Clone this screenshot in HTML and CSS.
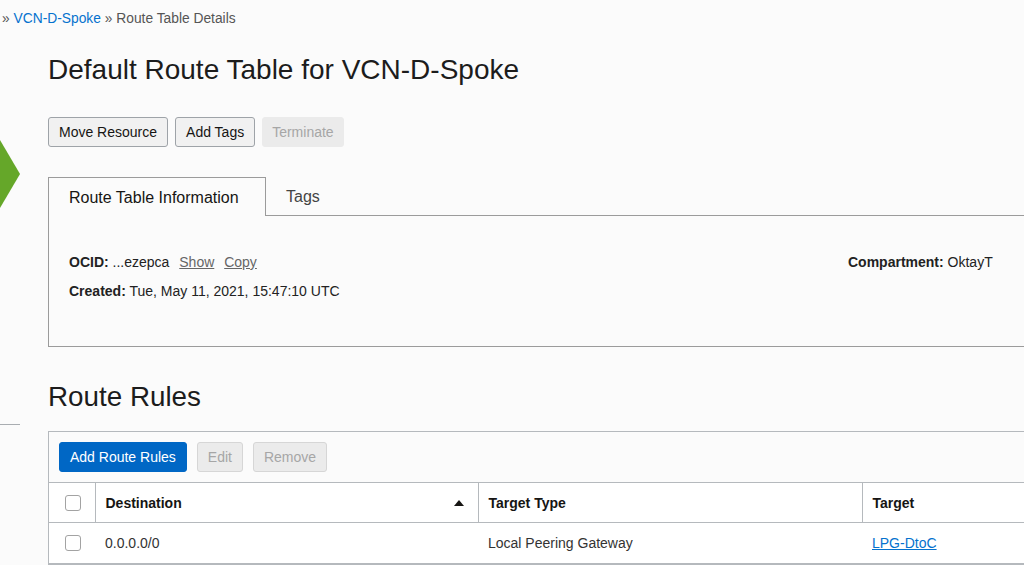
FILE: index.html
```html
<!DOCTYPE html>
<html>
<head>
<meta charset="utf-8">
<link rel="stylesheet" href="styles.css">
</head>
<body>
<div class="breadcrumb">» <a href="#" class="crumb-link">VCN-D-Spoke</a> » Route Table Details</div>
<div class="layout">
  <aside class="side">
    <svg class="side-arrow" width="20" height="70" viewBox="0 0 20 70"><polygon points="0,0 20,34 0,68" fill="#65a729"/></svg>
    <div class="side-line"></div>
  </aside>
  <main class="main">
    <h1 class="title">Default Route Table for VCN-D-Spoke</h1>
    <div class="actions">
      <button class="btn">Move Resource</button>
      <button class="btn">Add Tags</button>
      <button class="btn btn-disabled">Terminate</button>
    </div>
    <div class="tabs">
      <div class="tab tab-active">Route Table Information</div>
      <div class="tab">Tags</div>
      <div class="tab-fill"></div>
    </div>
    <div class="info-panel">
      <div class="info-col info-left">
        <div class="info-row"><b>OCID:</b> ...ezepca <a class="info-link" href="#">Show</a> <a class="info-link" href="#">Copy</a></div>
        <div class="info-row"><b>Created:</b> Tue, May 11, 2021, 15:47:10 UTC</div>
      </div>
      <div class="info-col">
        <div class="info-row"><b>Compartment:</b> OktayT</div>
      </div>
    </div>
    <h2 class="section-title">Route Rules</h2>
    <div class="table-panel">
      <div class="toolbar">
        <button class="btn btn-primary">Add Route Rules</button>
        <button class="btn btn-disabled">Edit</button>
        <button class="btn btn-disabled">Remove</button>
      </div>
      <table class="grid">
        <colgroup>
          <col class="c-check"><col class="c-dest"><col class="c-type"><col class="c-target">
        </colgroup>
        <thead>
          <tr>
            <th class="cell-check"><span class="checkbox"></span></th>
            <th><div class="th-sort"><span>Destination</span><span class="sort-arrow"></span></div></th>
            <th>Target Type</th>
            <th>Target</th>
          </tr>
        </thead>
        <tbody>
          <tr>
            <td class="cell-check"><span class="checkbox"></span></td>
            <td>0.0.0.0/0</td>
            <td>Local Peering Gateway</td>
            <td><a class="link" href="#">LPG-DtoC</a></td>
          </tr>
        </tbody>
      </table>
    </div>
  </main>
</div>
</body>
</html>
```

FILE: styles.css
```css
html, body {
  margin: 0;
  padding: 0;
  overflow: hidden;
}
body {
  background: #fbfbfb;
  font-family: "Liberation Sans", Arial, Helvetica, sans-serif;
  color: #161513;
  width: 1024px;
  height: 565px;
}
a { text-decoration: none; }

.breadcrumb {
  padding: 11px 0 0 2px;
  font-size: 13.8px;
  line-height: 16px;
  color: #555;
}
.crumb-link { color: #0572ce; }

.layout {
  display: flex;
}
.side {
  width: 20px;
  flex: 0 0 20px;
  display: flex;
  flex-direction: column;
}
.side-arrow {
  display: block;
  margin-top: 113px;
}
.side-line {
  margin-top: 214px;
  height: 1px;
  width: 20px;
  background: #a9adb1;
}
.main {
  padding-left: 28px;
  width: 1100px;
  flex: 0 0 1100px;
}
.title {
  margin: 25px 0 0;
  font-size: 28px;
  line-height: 36px;
  font-weight: normal;
  color: #1c1c1c;
}
.actions {
  display: flex;
  gap: 7px;
  margin-top: 29px;
}
.btn {
  font-family: inherit;
  font-size: 14px;
  height: 30px;
  padding: 0 10px;
  border: 1px solid #9ea3a8;
  border-radius: 3px;
  background: #f1f1f1;
  color: #161513;
  cursor: pointer;
}
.btn-disabled {
  background: #ebebeb;
  border-color: #d6d6d6;
  color: #a6a6a6;
}
.actions .btn-disabled {
  border-color: #ebebeb;
  padding: 0 9px;
}
.btn-primary {
  background: #0067c5;
  border-color: #0067c5;
  color: #fff;
}

.tabs {
  display: flex;
  margin-top: 30px;
  height: 39px;
}
.tab {
  font-size: 16px;
  line-height: 40px;
  padding: 0 20px;
  color: #444;
  border-bottom: 1px solid #9b9b9b;
}
.tab-active {
  color: #161513;
  border: 1px solid #9b9b9b;
  border-bottom: none;
  padding: 0 20px;
  width: 176px;
}
.tab-fill {
  flex: 1;
  border-bottom: 1px solid #9b9b9b;
}
.info-panel {
  display: flex;
  border-left: 1px solid #9b9b9b;
  border-bottom: 1px solid #9b9b9b;
  height: 131px;
  padding: 38px 0 0 20px;
  box-sizing: border-box;
  font-size: 14px;
}
.info-col { display: flex; flex-direction: column; gap: 13px; }
.info-left { width: 779px; }
.info-row { line-height: 16px; color: #222; }
.info-row b { color: #222; }
.info-link {
  color: #666;
  text-decoration: underline;
  margin-left: 6px;
}

.section-title {
  margin: 32px 0 0;
  font-size: 27.8px;
  line-height: 36px;
  font-weight: normal;
  color: #1c1c1c;
}
.table-panel {
  margin-top: 16px;
  border: 1px solid #b5b9bd;
  border-right: none;
}
.toolbar {
  display: flex;
  gap: 10px;
  padding: 10px 10px 10px;
}
.grid {
  border-collapse: collapse;
  width: 100%;
  table-layout: fixed;
  background: #fff;
  font-size: 14px;
}
.c-check { width: 46px; }
.c-dest { width: 383px; }
.c-type { width: 384px; }
.grid th, .grid td {
  text-align: left;
  height: 40px;
  padding: 0 10px;
  border-top: 1px solid #b5b9bd;
  border-bottom: 1px solid #b5b9bd;
  color: #161513;
}
.grid th {
  height: 39px;
  font-weight: bold;
  border-left: 1px solid #b5b9bd;
}
.grid th.cell-check { border-left: none; }
.grid td { color: #333; }
.grid td.cell-check, .grid th.cell-check {
  padding: 0 0 0 16px;
}
.checkbox {
  display: block;
  width: 14px;
  height: 14px;
  border: 1px solid #a3a3a3;
  border-radius: 3px;
  background: #fff;
}
.th-sort {
  display: flex;
  justify-content: space-between;
  align-items: center;
}
.sort-arrow {
  width: 0;
  height: 0;
  border-left: 5px solid transparent;
  border-right: 5px solid transparent;
  border-bottom: 6px solid #161513;
  margin-right: 4px;
}
.link {
  color: #0572ce;
  text-decoration: underline;
}
```
